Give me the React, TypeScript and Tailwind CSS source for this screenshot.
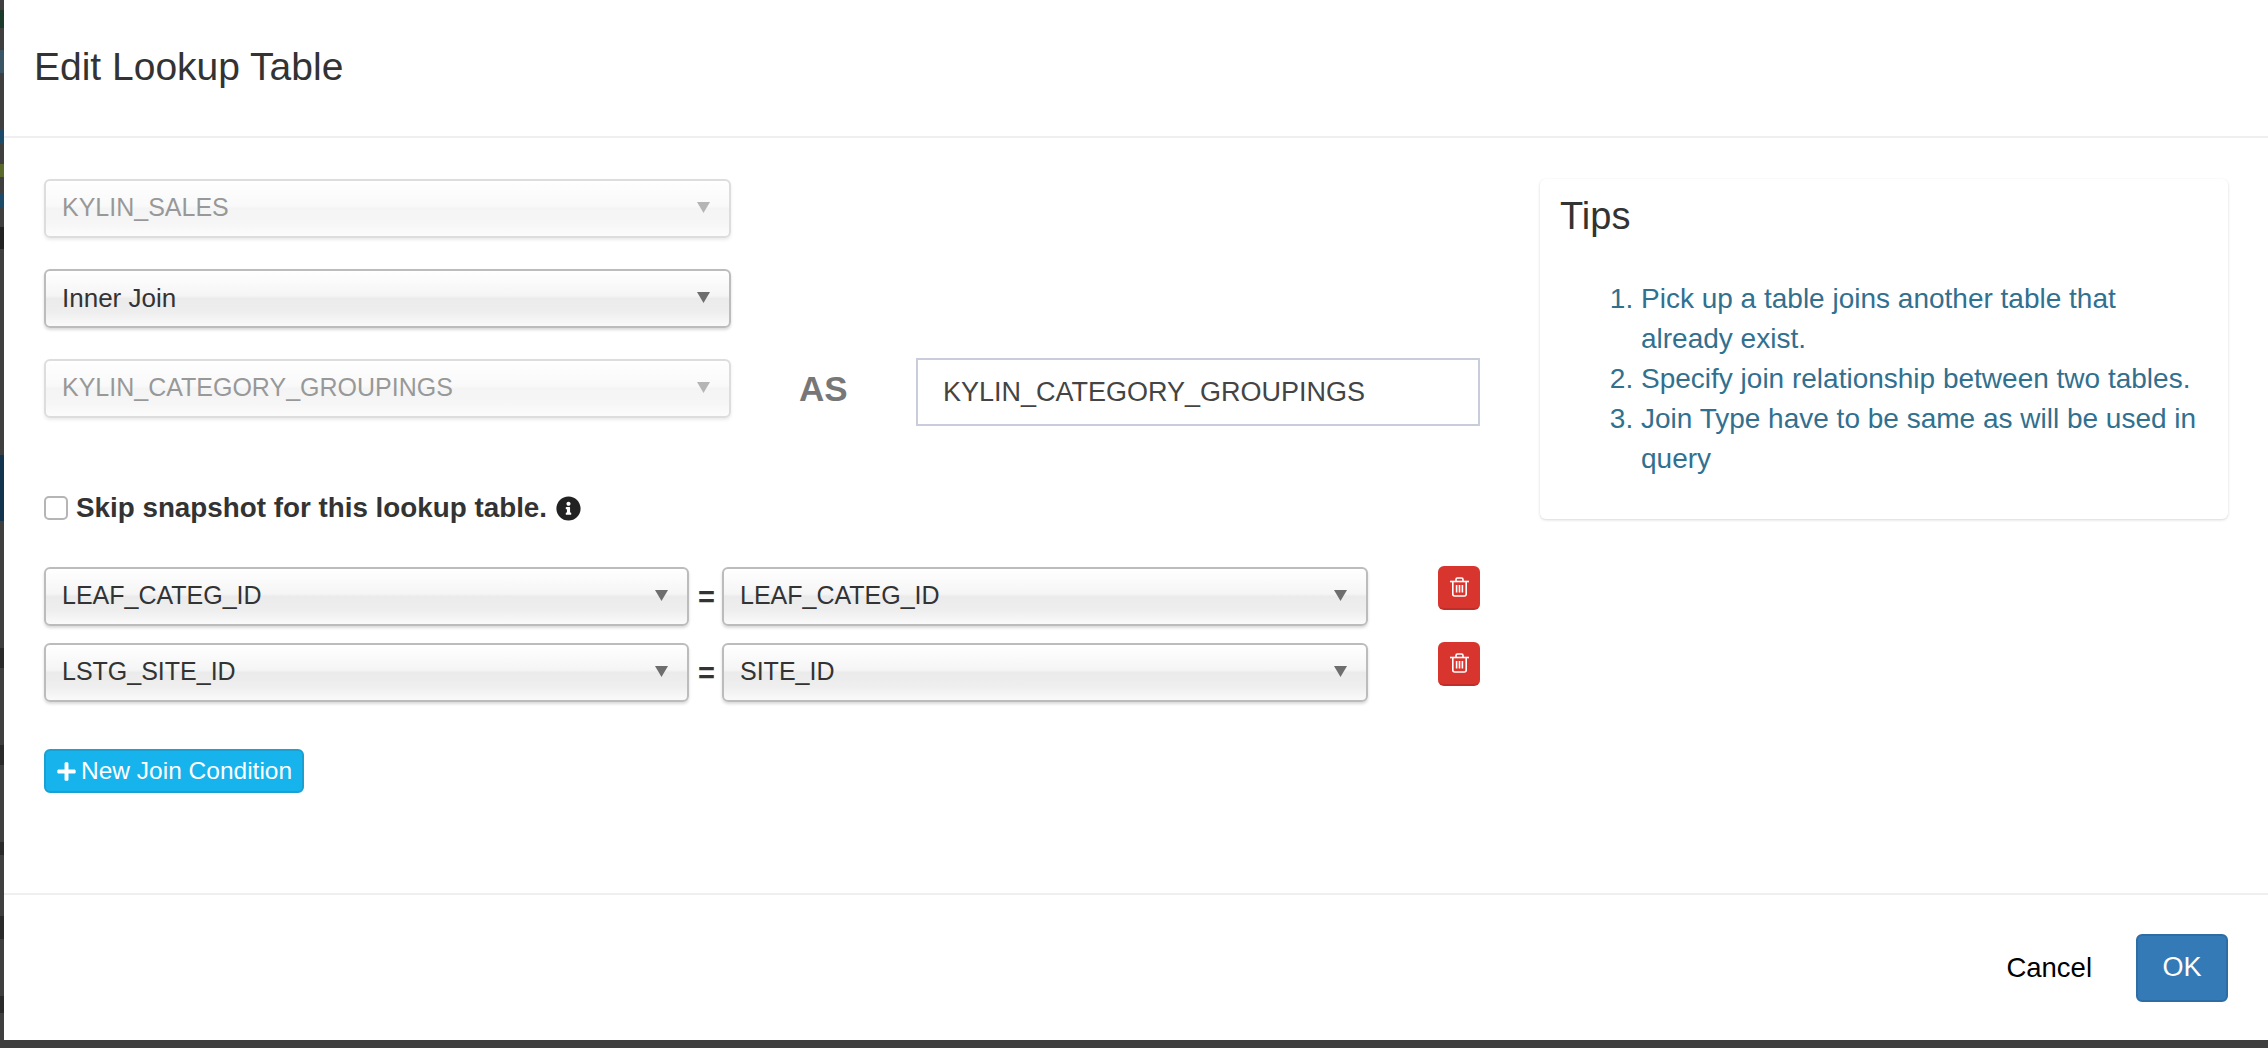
import React from 'react';
import { FaInfoCircle, FaPlus } from 'react-icons/fa';

function FakeSelect({ label, disabled, width, textSize = 'text-[25px]' }: { label: string; disabled?: boolean; width: string; textSize?: string }) {
  return (
    <div
      className={`relative flex h-[59px] shrink-0 items-center rounded-[6px] border-2 border-[#bcbcbc] bg-[linear-gradient(to_bottom,#ffffff_0%,#f5f5f5_45%,#ebebeb_50%,#eeeeee_75%,#fafafa_100%)] pl-[16px] text-[#333] shadow-[0_2px_3px_rgba(0,0,0,0.15)] ${textSize} ${width} ${disabled ? 'opacity-50' : ''}`}
    >
      <span className="-mt-[1px]">{label}</span>
      <svg className="absolute right-[19px] top-[21px]" width="13" height="11" viewBox="0 0 13 11">
        <polygon points="0,0 13,0 6.5,11" fill="#6e6e6e" />
      </svg>
    </div>
  );
}

function TrashIcon() {
  return (
    <svg width="19" height="20" viewBox="0 0 19 20" fill="none" stroke="white" strokeWidth="1.6">
      <path d="M0 4.5H19" />
      <path d="M6 4.5V2.4Q6 1 7.4 1H11.6Q13 1 13 2.4V4.5" />
      <path d="M2.8 4.5V17Q2.8 19 4.8 19H14.2Q16.2 19 16.2 17V4.5" />
      <path d="M6.6 8V15.5M9.5 8V15.5M12.4 8V15.5" />
    </svg>
  );
}

function JoinRow({ left, right }: { left: string; right: string }) {
  return (
    <div className="flex items-start">
      <div className="mt-px">
        <FakeSelect label={left} width="w-[645px]" />
      </div>
      <span className="ml-[9px] mt-[10px] w-[24px] text-[29px] font-bold text-[#333]">=</span>
      <div className="mt-px">
        <FakeSelect label={right} width="w-[646px]" />
      </div>
      <button className="ml-auto flex h-[44px] w-[42px] items-center justify-center rounded-[6px] border-b-2 border-[#c12e2a] bg-[#d9352f]">
        <TrashIcon />
      </button>
    </div>
  );
}

export default function App() {
  return (
    <div className="flex h-[1048px] w-full overflow-hidden bg-[#3f3f3f] font-['Liberation_Sans',Arial,sans-serif]">
      {/* Page behind the modal, only a sliver shows */}
      <div className="flex w-[4px] shrink-0 flex-col">
        <div className="mt-[10px] h-[18px] bg-[#1c3a2b]" />
        <div className="mt-[22px] h-[23px] bg-[#3a5563]" />
        <div className="mt-[57px] h-[14px] bg-[#1d4a68]" />
        <div className="mt-[20px] h-[13px] bg-[#5a6a2a]" />
        <div className="mt-[17px] h-[13px] bg-[#1d4a68]" />
        <div className="mt-[20px] h-[22px] bg-[#222]" />
        <div className="mt-[206px] h-[66px] bg-[#12344f]" />
        <div className="mt-[127px] h-[20px] bg-[#2a2a2a]" />
        <div className="mt-[77px] h-[20px] bg-[#2a2a2a]" />
        <div className="mt-[77px] h-[13px] bg-[#2a2a2a]" />
        <div className="mt-[61px] h-[23px] bg-[#2a2a2a]" />
        <div className="mt-[57px] h-[17px] bg-[#2a2a2a]" />
      </div>

      <div className="mb-[8px] flex min-w-0 flex-1 flex-col bg-white">
        {/* Header */}
        <div className="flex h-[138px] shrink-0 items-center border-b-2 border-[#efefef] pl-[30px]">
          <h4 className="-mt-[2px] text-[39px] text-[#333]">Edit Lookup Table</h4>
        </div>

        {/* Body */}
        <div className="flex h-[755px] shrink-0 items-start pl-[40px] pr-[40px] pt-[41px]">
          <div className="w-[1436px]">
            <div className="flex flex-col gap-[31px]">
              <FakeSelect label="KYLIN_SALES" disabled width="w-[687px]" />
              <FakeSelect label="Inner Join" width="w-[687px]" textSize="text-[26px]" />
            </div>
            <div className="mt-[30px] flex items-start">
              <div className="mt-px">
                <FakeSelect label="KYLIN_CATEGORY_GROUPINGS" disabled width="w-[687px]" />
              </div>
              <span className="ml-[68px] mt-[5px] text-[35px] font-bold text-[#777]">AS</span>
              <input
                readOnly
                value="KYLIN_CATEGORY_GROUPINGS"
                className="ml-auto h-[68px] w-[564px] border-2 border-[#c9ccda] pl-[25px] text-[27px] text-[#444] outline-none"
              />
            </div>
            <div className="mt-[69px] flex h-[26px] items-center">
              <span className="h-[24px] w-[24px] rounded-[5px] border-2 border-[#b5b5b5] bg-white" />
              <label className="ml-[8px] text-[27.8px] font-bold text-[#333]">Skip snapshot for this lookup table.</label>
              <FaInfoCircle className="ml-[9px] text-[25px] text-[#222]" />
            </div>
            <div className="mt-[45px] flex flex-col gap-[16px]">
              <JoinRow left="LEAF_CATEG_ID" right="LEAF_CATEG_ID" />
              <JoinRow left="LSTG_SITE_ID" right="SITE_ID" />
            </div>
            <button className="mt-[47px] flex h-[44px] w-[260px] items-center rounded-[6px] border-2 border-[#1ba0d2] bg-[#16b3ec] pl-[10px] text-[24.5px] text-white">
              <FaPlus className="mr-[4px] text-[21px]" />
              New Join Condition
            </button>
          </div>

          {/* Tips */}
          <div className="ml-[60px] h-[340px] w-[688px] rounded-[6px] pl-[20px] pr-[20px] pt-[16px] shadow-[0_1px_3px_rgba(0,0,0,0.16)]">
            <h4 className="text-[38px] leading-[42px] text-[#333]">Tips</h4>
            <ol className="mt-[42px] list-decimal pl-[81px] text-[28px] leading-[40px] text-[#31708f]">
              <li>Pick up a table joins another table that already exist.</li>
              <li>Specify join relationship between two tables.</li>
              <li>Join Type have to be same as will be used in query</li>
            </ol>
          </div>
        </div>

        {/* Footer */}
        <div className="flex flex-1 items-center justify-end border-t-2 border-[#efefef] pr-[40px]">
          <button className="mr-[44px] text-[27.5px] text-black">Cancel</button>
          <button className="h-[68px] w-[92px] rounded-[6px] border-2 border-[#2e6da4] bg-[#337ab7] text-[27px] text-white">OK</button>
        </div>
      </div>
    </div>
  );
}
